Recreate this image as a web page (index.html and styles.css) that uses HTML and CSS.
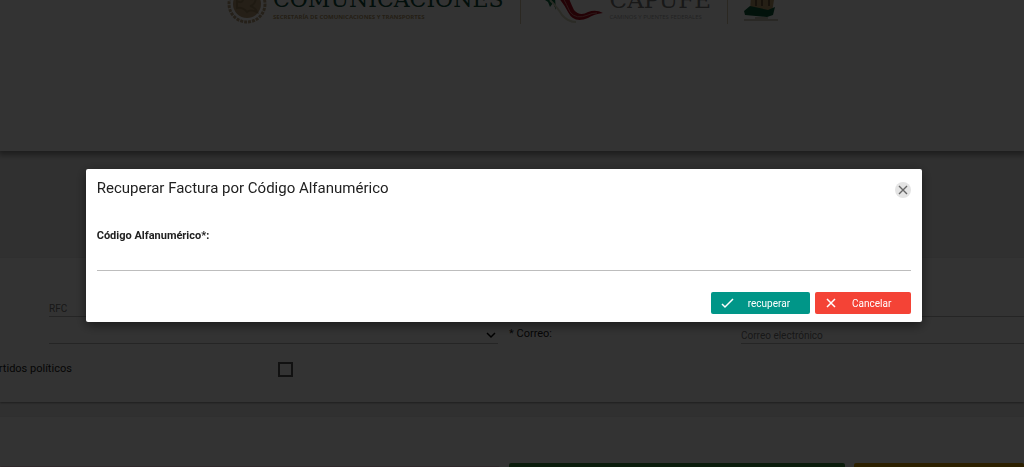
FILE: index.html
```html
<!DOCTYPE html>
<html lang="es">
<head>
  <meta charset="UTF-8">
  <meta name="viewport" content="width=device-width, initial-scale=1.0">
  <title>Recuperar Factura</title>
  <link rel="stylesheet" href="styles.css">
</head>
<body>
  <div class="page">
    <header class="header">
      <div class="brand">
        <svg class="seal" viewBox="0 0 40 40" aria-hidden="true">
          <circle cx="20" cy="20" r="18" fill="none" stroke="#b8a27e" stroke-width="3" stroke-dasharray="3 1"/>
          <circle cx="20" cy="20" r="14" fill="#b89b74"/>
          <path d="M10 17q6 4 7-5 6 5 12 2-1 7-6 8 5 1 7 6-7-3-10 0-4-5-10-4z" fill="none" stroke="#9c825c" stroke-width="2"/>
        </svg>
        <div class="brand-text">
          <span class="brand-name sct">COMUNICACIONES</span>
          <span class="brand-sub sct-sub">SECRETARÍA DE COMUNICACIONES Y TRANSPORTES</span>
        </div>
      </div>
      <div class="brand capufe-brand">
        <svg class="ribbon" viewBox="0 0 64 40" aria-hidden="true">
          <path d="M2 14l6 4 2 5 3-4 3 7-1-12z" fill="#0c6b40"/>
          <path d="M17 12q7 8 11 16 6 12 20 6 6-4 15-5-7-4-15-1-8 5-14-2-3-6-6-14z" fill="#b00d20"/>
          <path d="M22 12q5 9 8 16 6 8 18 3 4-2 9-2" fill="none" stroke="#d87a7a" stroke-width="1"/>
          <path d="M10 16q8 8 12 15 6 7 14 7" fill="none" stroke="#d8d8bc" stroke-width="2"/>
        </svg>
        <div class="brand-text">
          <span class="brand-name">CAPUFE</span>
          <span class="brand-sub">CAMINOS Y PUENTES FEDERALES</span>
        </div>
      </div>
      <div class="brand last-brand">
        <svg class="seal" viewBox="0 0 40 40" aria-hidden="true">
          <path d="M9 10l24-1-3 20-22-1z" fill="#b79b68"/>
          <path d="M2 27l6-5 18 4 7-3-2 8-6 2-22-2z" fill="#0b5b38"/>
          <path d="M14 12v10M20 11v11M27 11v11" stroke="#72593c" stroke-width="2"/>
          <path d="M2 36h34M13 34h13" stroke="#9a9072" stroke-width="1"/>
        </svg>
      </div>
    </header>

    <main>
      <form class="card datos">
        <span></span>
        <input class="field" type="text" placeholder="RFC" aria-label="RFC">
        <span></span>
        <input class="field" type="text" aria-label="Nombre">

        <span></span>
        <div class="select-wrap">
          <select class="field" aria-label="Uso"><option></option></select>
          <svg class="arrow" viewBox="0 0 10 10" aria-hidden="true"><path d="M1 3l4 4 4-4" fill="none" stroke="#000" stroke-width="1.5"/></svg>
        </div>
        <label for="correo">* Correo:</label>
        <input class="field" id="correo" type="email" placeholder="Correo electrónico">

        <div class="check-row">
          <label for="partidos">Partidos políticos</label>
          <input type="checkbox" id="partidos">
        </div>
      </form>

      <section class="card acciones">
        <button class="accion rosa" type="button" aria-label="Limpiar"></button>
        <button class="accion verde" type="button" aria-label="Guardar"></button>
        <button class="accion ambar" type="button" aria-label="Regresar"></button>
      </section>
    </main>
  </div>

  <div class="overlay">
    <div class="dialog" role="dialog" aria-modal="true" aria-labelledby="dialogTitle">
      <div class="dialog-header">
        <h2 id="dialogTitle">Recuperar Factura por Código Alfanumérico</h2>
        <button class="close" type="button" aria-label="Cerrar">
          <svg viewBox="0 0 16 16" aria-hidden="true"><path d="M4 4l8 8M12 4l-8 8" stroke="#666" stroke-width="1.4"/></svg>
        </button>
      </div>
      <label class="dialog-label" for="codigo">Código Alfanumérico*:</label>
      <input class="codigo" id="codigo" type="text">
      <div class="dialog-footer">
        <button class="btn ok" type="button">
          <svg viewBox="0 0 14 14" aria-hidden="true"><path d="M2 8l3 3 8-8" fill="none" stroke="#fff" stroke-width="1.5"/></svg>
          <span>recuperar</span>
        </button>
        <button class="btn cancel" type="button">
          <svg viewBox="0 0 14 14" aria-hidden="true"><path d="M3 3l8 8M11 3l-8 8" stroke="#fff" stroke-width="1.5"/></svg>
          <span>Cancelar</span>
        </button>
      </div>
    </div>
  </div>
</body>
</html>
```
FILE: styles.css
```css
* {
  box-sizing: border-box;
}
body {
  margin: 0;
  font-family: Roboto, sans-serif;
  font-size: 11px;
  color: #212121;
  background: #f0f0f0;
}
.page {
  height: 100vh;
  overflow: hidden;
}
.header {
  display: flex;
  height: 151px;
  padding-left: 227px;
  overflow: hidden;
  background: #fff;
  box-shadow: 0 2px 6px 2px rgba(0, 0, 0, 0.4);
}
.brand {
  display: flex;
  height: 40px;
  margin-top: -16px;
  border-right: 1px solid #d8c9a8;
}
.seal {
  width: 40px;
  height: 40px;
}
.brand-text {
  display: flex;
  flex-direction: column;
  padding: 2px 16px 0 6px;
}
.brand-name {
  font-family: "DejaVu Serif", serif;
  font-size: 23px;
  line-height: 28px;
  color: #777;
}
.brand-name.sct {
  font-size: 22px;
  color: #0b4a38;
}
.brand-sub {
  font-family: "Open Sans", sans-serif;
  font-size: 6px;
  line-height: 6px;
  color: #aaa;
}
.brand-sub.sct-sub {
  font-weight: bold;
  color: #b39a6b;
}
.capufe-brand {
  padding-left: 19px;
}
.ribbon {
  width: 64px;
  height: 40px;
}
.last-brand {
  padding-left: 14px;
  border-right: none;
}
main {
  margin-top: 107px;
}
.card {
  background: #fff;
  box-shadow: 0 1px 2px rgba(0, 0, 0, 0.4);
}
.datos {
  display: grid;
  grid-template-columns: 38px 449fr 221px 283fr;
  column-gap: 11px;
  align-items: end;
  height: 144px;
  padding-top: 42px;
  grid-template-rows: 17px 27px auto;
}
.field {
  display: block;
  width: 100%;
  height: 17px;
  padding: 0;
  font: inherit;
  font-size: 10px;
  color: #212121;
  background: none;
  border: none;
  border-bottom: 1px solid #bbb;
  border-radius: 0;
  outline: none;
  appearance: none;
}
.field::placeholder {
  color: #777;
}
.datos > label {
  line-height: 20px;
}
.select-wrap {
  position: relative;
}
.arrow {
  position: absolute;
  right: 2px;
  top: 3px;
  width: 10px;
  height: 10px;
}
.check-row {
  grid-column: 1 / -1;
  align-self: start;
  display: flex;
  justify-content: space-between;
  align-items: center;
  width: 307px;
  margin: 16px 0 0 -14px;
}
.check-row input {
  width: 15px;
  height: 15px;
  margin: 2px 0 0;
  appearance: none;
  border: 2px solid #555;
}
.acciones {
  display: grid;
  grid-template-columns: 500fr 336fr 170fr;
  gap: 9px;
  margin-top: 15px;
  padding-top: 46px;
}
.accion {
  height: 30px;
  border: none;
  border-radius: 2px;
}
.rosa {
  margin-top: 3px;
  background: #e8c8d4;
}
.verde {
  background: #388e3c;
}
.ambar {
  background: #e0a000;
}
.overlay {
  position: fixed;
  inset: 0;
  display: flex;
  align-items: center;
  justify-content: center;
  padding: 24px 16px 0 0;
  background: rgba(0, 0, 0, 0.8);
}
.dialog {
  width: 83%;
  padding: 9px 11px 8px;
  background: #fff;
  border-radius: 2px;
  box-shadow: 0 3px 12px rgba(0, 0, 0, 0.5);
}
.dialog-header {
  display: flex;
  justify-content: space-between;
  align-items: flex-end;
}
h2 {
  margin: 0;
  font-size: 15px;
  line-height: 20px;
  font-weight: normal;
}
.close {
  width: 16px;
  height: 16px;
  padding: 0;
  border: none;
  border-radius: 50%;
  background: #e4e4e4;
}
.close svg {
  display: block;
}
.dialog-label {
  display: block;
  margin-top: 31px;
  line-height: 14px;
  font-weight: bold;
}
.codigo {
  display: block;
  width: 100%;
  height: 28px;
  padding: 0;
  font: inherit;
  border: none;
  border-bottom: 1px solid #bdbdbd;
  outline: none;
}
.dialog-footer {
  display: flex;
  justify-content: flex-end;
  gap: 5px;
  margin-top: 21px;
}
.btn {
  display: flex;
  align-items: center;
  height: 22px;
  padding: 0 20px 0 9px;
  font: inherit;
  font-size: 10px;
  color: #fff;
  border: none;
  border-radius: 2px;
}
.btn svg {
  width: 14px;
  height: 14px;
  margin-right: 14px;
}
.ok {
  background: #009688;
}
.cancel {
  background: #f44336;
}
```
